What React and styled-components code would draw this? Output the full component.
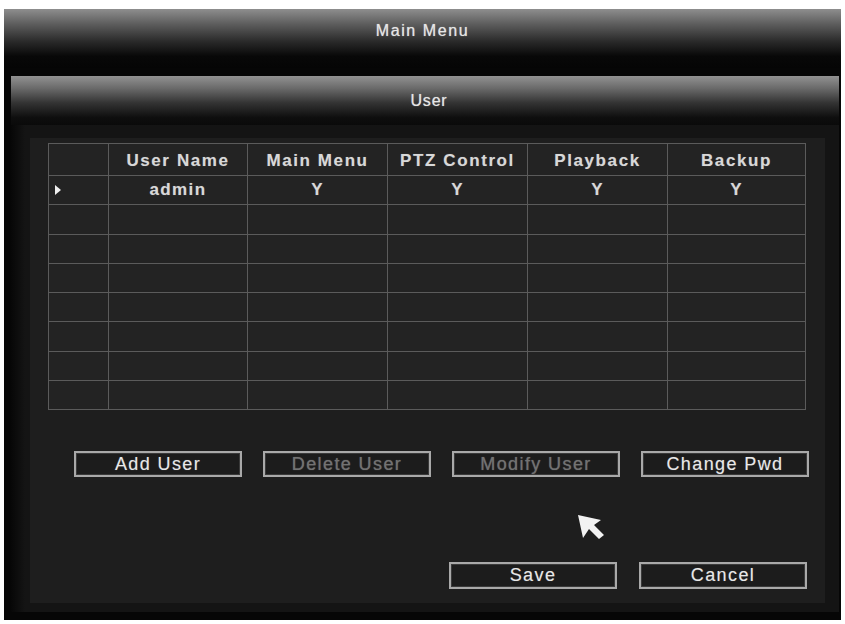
import React from 'react'
import styled, { createGlobalStyle } from 'styled-components'

const GlobalStyle = createGlobalStyle`
  html, body {
    margin: 0;
    background: #ffffff;
  }
  body {
    font-family: "Liberation Sans", Arial, sans-serif;
  }
`

const Page = styled.div`
  padding: 9px 4px 4px 4px;
`

const Window = styled.div`
  width: 837px;
  height: 611px;
  box-sizing: border-box;
  background: #060606;
  display: flex;
  flex-direction: column;
  padding-bottom: 8px;
`

const MainBar = styled.div`
  height: 59px;
  flex-shrink: 0;
  box-sizing: border-box;
  padding-top: 12px;
  background: linear-gradient(to bottom, #8e8e8e 0%, #5e5e5e 25%, #2a2a2a 55%, #080808 80%, #050505 100%);
  text-align: center;
  line-height: 20px;
`

const TitleText = styled.span`
  color: #e6e6e6;
  font-size: 16px;
  letter-spacing: ${p => p.$spacing || 1.6}px;
  text-shadow: 0 0 1px rgba(255, 255, 255, 0.6);
`

const Inner = styled.div`
  flex: 1;
  margin: 8px 2px 0 7px;
  background: #111111;
  display: flex;
  flex-direction: column;
`

const InnerBar = styled.div`
  height: 49px;
  flex-shrink: 0;
  display: flex;
  align-items: center;
  justify-content: center;
  padding-left: 8px;
  background: linear-gradient(to bottom, #929292 0%, #6a6a6a 25%, #333333 55%, #0e0e0e 85%, #0a0a0a 100%);
`

const InnerBody = styled.div`
  flex: 1;
  display: flex;
  padding: 13px 17px 9px 19px;
  background: linear-gradient(to right, #070707 0px, #141414 14px, #141414 100%);
`

const Content = styled.div`
  position: relative;
  flex: 1;
  background: #1e1e1e;
  padding: 5px 16px 14px 18px;
  display: flex;
  flex-direction: column;
`

const Grid = styled.div`
  display: grid;
  grid-template-columns: 59px 138px 139px 139px 139px 137px;
  grid-template-rows: 31px repeat(8, 1fr);
  gap: 1px;
  padding: 1px;
  width: 758px;
  height: 267px;
  box-sizing: border-box;
  background: #5b5b5b;
`

const Cell = styled.div`
  background: #232323;
  display: flex;
  align-items: center;
  justify-content: ${p => (p.$left ? 'flex-start' : 'center')};
  color: #d8d8d8;
  font-size: 17px;
  font-weight: bold;
  letter-spacing: ${p => (p.$head ? 1.6 : 1.4)}px;
  text-shadow: 0 0 1px rgba(255, 255, 255, 0.3);
  padding-top: ${p => (p.$head ? 2 : 0)}px;
`

const Marker = styled.span`
  width: 0;
  height: 0;
  margin-left: 6px;
  border-left: 6px solid #eeeeee;
  border-top: 5px solid transparent;
  border-bottom: 5px solid transparent;
`

const ButtonRow = styled.div`
  display: flex;
  gap: 21px;
  margin-top: 41px;
  margin-left: 26px;
  justify-content: flex-start;
`

const ActionRow = styled.div`
  display: flex;
  gap: 22px;
  margin-top: 85px;
  margin-right: 2px;
  justify-content: flex-end;
`

const Button = styled.div`
  width: 168px;
  height: ${p => p.$h || 26}px;
  box-sizing: border-box;
  border: 2px solid #a9a9a9;
  box-shadow: inset 0 0 0 1px #3a3a3a;
  background: #1c1c1c;
  display: flex;
  align-items: center;
  justify-content: center;
  color: ${p => (p.$disabled ? '#727272' : '#e8e8e8')};
  font-size: 18px;
  letter-spacing: 1.4px;
  text-shadow: 0 0 1px rgba(255, 255, 255, 0.3);
`

const Pointer = styled.svg`
  position: absolute;
  left: 548px;
  top: 377px;
`

const headers = ['', 'User Name', 'Main Menu', 'PTZ Control', 'Playback', 'Backup']
const users = [['admin', 'Y', 'Y', 'Y', 'Y']]

export default function App() {
  const rows = []
  for (let r = 0; r < 8; r++) rows.push(users[r] || null)

  return (
    <Page>
      <GlobalStyle />
      <Window>
        <MainBar>
          <TitleText>Main Menu</TitleText>
        </MainBar>
        <Inner>
          <InnerBar>
            <TitleText $spacing={0.8}>User</TitleText>
          </InnerBar>
          <InnerBody>
            <Content>
              <Grid>
                {headers.map((h, i) => (
                  <Cell key={'h' + i} $head>{h}</Cell>
                ))}
                {rows.map((row, r) => (
                  <React.Fragment key={r}>
                    <Cell $left>{row && <Marker />}</Cell>
                    {[0, 1, 2, 3, 4].map(c => (
                      <Cell key={c}>{row ? row[c] : ''}</Cell>
                    ))}
                  </React.Fragment>
                ))}
              </Grid>

              <ButtonRow>
                <Button>Add User</Button>
                <Button $disabled>Delete User</Button>
                <Button $disabled>Modify User</Button>
                <Button>Change Pwd</Button>
              </ButtonRow>

              <Pointer width="27" height="25" viewBox="0 0 27 25">
                <polygon points="0,0 23,5 16,10 26,20 21,24 11,14 5,23" fill="#f2f2f2" />
              </Pointer>

              <ActionRow>
                <Button $h={27}>Save</Button>
                <Button $h={27}>Cancel</Button>
              </ActionRow>
            </Content>
          </InnerBody>
        </Inner>
      </Window>
    </Page>
  )
}
